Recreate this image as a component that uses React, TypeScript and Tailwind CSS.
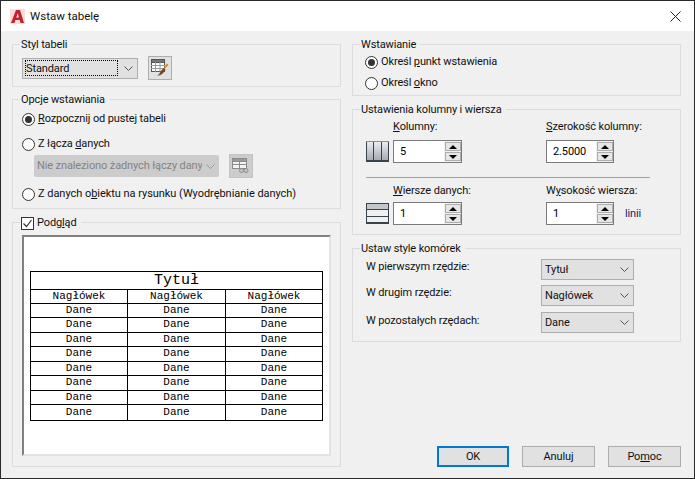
import type { ReactNode } from "react";

function Chevron({ color = "#555" }: { color?: string }) {
  return (
    <svg width="9" height="5" viewBox="0 0 9 5" fill="none" className="shrink-0">
      <path d="M0.5 0.5 L4.5 4.5 L8.5 0.5" stroke={color} strokeWidth="1" />
    </svg>
  );
}

function Group({ legend, className, children }: { legend: ReactNode; className: string; children: ReactNode }) {
  return (
    <div className={`relative border border-[#dcdcdc] ${className}`}>
      <div className="absolute -top-[8px] left-[7px] bg-[#f0f0f0] pr-[4px] pl-[1px] leading-[16px]">{legend}</div>
      {children}
    </div>
  );
}

function Radio({ checked, children }: { checked?: boolean; children: ReactNode }) {
  return (
    <div className="flex h-[18px] items-center gap-[3px]">
      <div className="flex h-[13px] w-[13px] items-center justify-center rounded-full border border-[#333] bg-white">
        {checked && <div className="h-[7px] w-[7px] rounded-full bg-[#333]" />}
      </div>
      <span>{children}</span>
    </div>
  );
}

function Combo({ width, children }: { width: string; children: ReactNode }) {
  return (
    <div className={`flex h-[21px] items-center justify-between border border-[#adadad] bg-[#e1e1e1] pr-[4px] pl-[3px] ${width}`}>
      <span className="pt-[1px]">{children}</span>
      <Chevron />
    </div>
  );
}

function Spinner({ width, value }: { width: string; value: string }) {
  return (
    <div className={`flex h-[23px] border border-[#7a7a7a] bg-white ${width}`}>
      <div className="flex flex-1 items-center pl-[6px] text-[#000]">{value}</div>
      <div className="flex w-[17px] flex-col gap-[1px] bg-[#f0f0f0] p-[1px] pr-0">
        <div className="flex flex-1 items-center justify-center border border-[#adadad] bg-[#e6e6e6]">
          <div className="h-0 w-0 border-x-[4px] border-b-[4px] border-x-transparent border-b-black" />
        </div>
        <div className="flex flex-1 items-center justify-center border border-[#adadad] bg-[#e6e6e6]">
          <div className="h-0 w-0 border-x-[4px] border-t-[4px] border-x-transparent border-t-black" />
        </div>
      </div>
    </div>
  );
}

function ColumnsIcon() {
  return (
    <svg width="23" height="21" viewBox="0 0 23 21" className="shrink-0">
      <defs>
        <linearGradient id="col" x1="0" y1="0" x2="0" y2="1">
          <stop offset="0" stopColor="#eef0f3" />
          <stop offset="1" stopColor="#a3a8b0" />
        </linearGradient>
      </defs>
      <rect x="0" y="0" width="23" height="20" fill="url(#col)" />
      <path d="M0.5 0V20M7.5 0V20M15.5 0V20M22.5 0V20" stroke="#39424e" />
      <path d="M0 0.5H23" stroke="#8a9099" />
      <rect x="0" y="19" width="23" height="2" fill="#39424e" />
    </svg>
  );
}

function RowsIcon() {
  return (
    <svg width="23" height="21" viewBox="0 0 23 21" className="shrink-0">
      <rect x="0" y="0" width="23" height="6" fill="#c3c7cc" />
      <path d="M0 0.5H23M0 6.5H23M0 13.5H23" stroke="#39424e" />
      <path d="M0.5 0V20M22.5 0V20" stroke="#39424e" />
      <rect x="0" y="19" width="23" height="2" fill="#39424e" />
    </svg>
  );
}

function AutocadLogo() {
  return (
    <svg width="15" height="15" viewBox="0 0 15 15" className="shrink-0">
      <rect width="15" height="15" fill="#f8dcd8" />
      <path d="M1 14 L6 1 H10 L14 14 H10.5 L9.8 11 H5.4 L4.4 14 Z" fill="#c4202e" />
      <path d="M6.2 8.5 L7.8 4.2 L8.9 8.5 Z" fill="#f8dcd8" />
    </svg>
  );
}

function TableBrushIcon() {
  return (
    <svg width="18" height="18" viewBox="0 0 18 18">
      <rect x="0.5" y="0.5" width="13" height="12" fill="#fff" stroke="#555" />
      <rect x="0.5" y="0.5" width="13" height="3" fill="#777" stroke="#555" />
      <path d="M0 6.5H14M0 9.5H14M4.5 3V13M9 3V13" stroke="#999" />
      <path d="M13 8 L16 4.5 L17.5 6 L14 9.5 Z" fill="#e08a1c" />
      <path d="M6 16.5 C9 16 9 11 13 9 L14.5 10.5 C13 14 10 17 6 16.5 Z" fill="#7a4a22" />
    </svg>
  );
}

function LinkTableIcon() {
  return (
    <svg width="18" height="16" viewBox="0 0 18 16">
      <rect x="0.5" y="0.5" width="14" height="10" fill="#f2f2f2" stroke="#8a8a8a" />
      <rect x="0.5" y="0.5" width="14" height="3" fill="#9a9a9a" stroke="#8a8a8a" />
      <path d="M0 6.5H15M7.5 3V11" stroke="#8a8a8a" />
      <circle cx="9.5" cy="12.5" r="2" fill="#c6c6c6" stroke="#8a8a8a" />
      <circle cx="14" cy="12.5" r="2" fill="#c6c6c6" stroke="#8a8a8a" />
    </svg>
  );
}

function DialogButton({ primary, children }: { primary?: boolean; children: ReactNode }) {
  return (
    <div
      className={`flex h-[21px] items-center justify-center bg-[#e1e1e1] ${
        primary ? "w-[72px] border-2 border-[#0078d7]" : "w-[73px] border border-[#adadad]"
      }`}
    >
      {children}
    </div>
  );
}

const rowHeights = ["h-[14px]", "h-[15px]", "h-[14px]", "h-[15px]", "h-[14px]", "h-[15px]", "h-[14px]", "h-[15px]"];

function PreviewTable() {
  return (
    <div className="w-[293px] border border-black font-['Liberation_Mono',monospace] text-[11px] leading-none tracking-normal text-black">
      <div className="flex h-[18px] items-center justify-center border-b border-black text-[15px]">Tytuł</div>
      <div className="flex h-[14px] border-b border-black">
        <div className="flex w-[97px] items-center justify-center border-r border-black">Nagłówek</div>
        <div className="flex w-[98px] items-center justify-center border-r border-black">Nagłówek</div>
        <div className="flex flex-1 items-center justify-center">Nagłówek</div>
      </div>
      {rowHeights.map((h, i) => (
        <div key={i} className={`flex ${h} ${i < 7 ? "border-b border-black" : ""}`}>
          <div className="flex w-[97px] items-center justify-center border-r border-black">Dane</div>
          <div className="flex w-[98px] items-center justify-center border-r border-black">Dane</div>
          <div className="flex flex-1 items-center justify-center">Dane</div>
        </div>
      ))}
    </div>
  );
}

export default function App() {
  return (
    <div className="flex h-[479px] w-[695px] flex-col border border-[#2b2b2b] bg-[#f0f0f0] font-['Roboto',sans-serif] text-[11px] leading-[16px] tracking-[-0.12px] text-[#111]">
      {/* title bar */}
      <div className="flex h-[30px] shrink-0 items-center bg-white pr-[13px] pl-[9px]">
        <AutocadLogo />
        <span className="ml-[5px] flex-1 text-[11.5px] tracking-normal">Wstaw tabelę</span>
        <svg width="11" height="11" viewBox="0 0 11 11">
          <path d="M0.5 0.5 L10.5 10.5 M10.5 0.5 L0.5 10.5" stroke="#222" />
        </svg>
      </div>

      <div className="flex flex-1 gap-[11px] pt-[13px] pr-[13px] pl-[11px]">
        {/* left column */}
        <div className="flex w-[329px] flex-col">
          <Group legend="Styl tabeli" className="h-[43px]">
            <div className="flex items-center gap-[10px] pt-[11px] pl-[9px]">
              <div className="flex h-[21px] w-[116px] items-center justify-between border border-[#adadad] bg-[#e1e1e1] pr-[4px] pl-[2px]">
                <span className="flex h-[16px] w-[93px] items-center border border-dotted border-black pt-[1px]">Standard</span>
                <Chevron />
              </div>
              <div className="flex h-[24px] w-[24px] items-center justify-center border border-[#adadad] bg-[#e1e1e1]">
                <TableBrushIcon />
              </div>
            </div>
          </Group>

          <Group legend="Opcje wstawiania" className="mt-[12px] h-[110px]">
            <div className="flex flex-col pt-[10px] pl-[9px]">
              <Radio checked>
                <u>R</u>ozpocznij od pustej tabeli
              </Radio>
              <div className="mt-[7px]">
                <Radio>
                  Z łącza <u>d</u>anych
                </Radio>
              </div>
              <div className="mt-[1px] flex items-center gap-[10px] pl-[12px]">
                <div className="flex h-[22px] w-[185px] items-center justify-between rounded-[2px] border border-[#cccccc] bg-[#cccccc] pr-[3px] pl-[2px] text-[#838383]">
                  <span className="w-[165px] overflow-hidden whitespace-nowrap">Nie znaleziono żadnych łączy dany</span>
                  <Chevron color="#999" />
                </div>
                <div className="flex h-[24px] w-[24px] items-center justify-center border border-[#c4c4c4] bg-[#cccccc]">
                  <LinkTableIcon />
                </div>
              </div>
              <div className="mt-[7px] tracking-[-0.04px]">
                <Radio>
                  Z danych o<u>b</u>iektu na rysunku (Wyodrębnianie danych)
                </Radio>
              </div>
            </div>
          </Group>

          <Group
            legend={
              <div className="flex items-center gap-[3px]">
                <div className="flex h-[13px] w-[13px] items-center justify-center border border-[#333] bg-white">
                  <svg width="11" height="11" viewBox="0 0 11 11" fill="none">
                    <path d="M1.5 5.5 L4.5 8.5 L9.5 2" stroke="#333" strokeWidth="1.2" />
                  </svg>
                </div>
                <span>
                  Podg<u>l</u>ąd
                </span>
              </div>
            }
            className="mt-[13px] h-[245px]"
          >
            <div className="pt-[12px] pl-[9px]">
              <div className="flex h-[221px] w-[309px] items-center justify-center border-2 border-[#e3e3e3] border-t-[#808080] border-l-[#808080] bg-white">
                <PreviewTable />
              </div>
            </div>
          </Group>
        </div>

        {/* right column */}
        <div className="flex w-[329px] flex-col">
          <Group legend="Wstawianie" className="h-[52px]">
            <div className="flex flex-col gap-[3px] pt-[8px] pl-[12px]">
              <Radio checked>
                Określ <u>p</u>unkt wstawienia
              </Radio>
              <Radio>
                Określ <u>o</u>kno
              </Radio>
            </div>
          </Group>

          <Group legend="Ustawienia kolumny i wiersza" className="mt-[13px] h-[126px]">
            <div className="flex flex-col pt-[9px] pl-[13px]">
              <div className="flex pl-[27px]">
                <span className="w-[153px]">
                  <u>K</u>olumny:
                </span>
                <span>
                  <u>S</u>zerokość kolumny:
                </span>
              </div>
              <div className="mt-[5px] flex items-center">
                <ColumnsIcon />
                <div className="ml-[4px]">
                  <Spinner width="w-[69px]" value="5" />
                </div>
                <div className="ml-[84px]">
                  <Spinner width="w-[68px]" value="2.5000" />
                </div>
              </div>
              <div className="mt-[14px] h-px w-[284px] bg-[#a0a0a0]" />
              <div className="mt-[5px] flex pl-[27px]">
                <span className="w-[153px]">
                  <u>W</u>iersze danych:
                </span>
                <span>
                  W<u>y</u>sokość wiersza:
                </span>
              </div>
              <div className="mt-[3px] flex items-center">
                <RowsIcon />
                <div className="ml-[4px]">
                  <Spinner width="w-[69px]" value="1" />
                </div>
                <div className="ml-[84px]">
                  <Spinner width="w-[68px]" value="1" />
                </div>
                <span className="ml-[11px] text-[#1a1a6e]">linii</span>
              </div>
            </div>
          </Group>

          <Group legend="Ustaw style komórek" className="mt-[13px] h-[94px]">
            <div className="flex flex-col pt-[10px] pl-[13px]">
              <div className="flex h-[21px]">
                <span className="w-[175px]">W pierwszym rzędzie:</span>
                <Combo width="w-[93px]">Tytuł</Combo>
              </div>
              <div className="mt-[5px] flex h-[21px]">
                <span className="w-[175px]">W drugim rzędzie:</span>
                <Combo width="w-[93px]">Nagłówek</Combo>
              </div>
              <div className="mt-[6px] flex h-[21px]">
                <span className="w-[175px] pt-[1px]">W pozostałych rzędach:</span>
                <Combo width="w-[93px]">Dane</Combo>
              </div>
            </div>
          </Group>

          <div className="mt-auto flex justify-end gap-[13px] pb-[11px]">
            <DialogButton primary>OK</DialogButton>
            <DialogButton>Anuluj</DialogButton>
            <DialogButton>
              <span>
                Po<u>m</u>oc
              </span>
            </DialogButton>
          </div>
        </div>
      </div>
    </div>
  );
}
